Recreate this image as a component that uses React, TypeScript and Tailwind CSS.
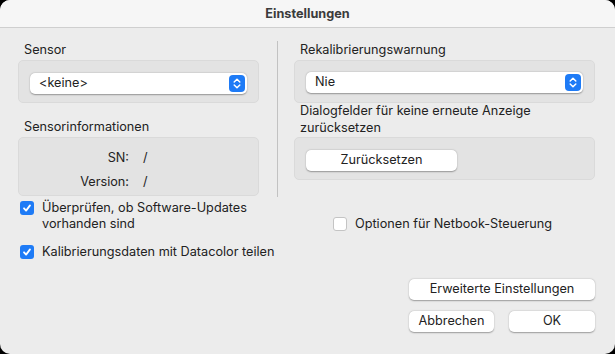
import React from 'react';

const font = { fontFamily: 'Inter, "Liberation Sans", Arial, sans-serif' };

function Stepper() {
  return (
    <div className="w-[16px] h-[17px] rounded-[4px] bg-[#1e7bf6] flex items-center justify-center">
      <svg width="10" height="13" viewBox="0 0 10 13" fill="none">
        <path d="M2.2 5 L5 2.2 L7.8 5" stroke="white" strokeWidth="1.5" strokeLinecap="round" strokeLinejoin="round" />
        <path d="M2.2 8 L5 10.8 L7.8 8" stroke="white" strokeWidth="1.5" strokeLinecap="round" strokeLinejoin="round" />
      </svg>
    </div>
  );
}

function Popup({ label }: { label: string }) {
  return (
    <div className="h-[21px] bg-white rounded-[5px] shadow-[0_0.5px_1.5px_rgba(0,0,0,0.35)] flex items-center justify-between pl-[9px] pr-[2px]">
      <span className="pb-[2px]">{label}</span>
      <Stepper />
    </div>
  );
}

function Button({ label, w }: { label: string; w: string }) {
  return (
    <button className={`${w} h-[21px] pb-[2px] bg-white rounded-[5px] shadow-[0_0.5px_1.5px_rgba(0,0,0,0.35)] flex items-center justify-center text-[12.7px] text-[#222]`}>
      {label}
    </button>
  );
}

function Check({ checked }: { checked: boolean }) {
  if (checked) {
    return (
      <div className="w-[14px] h-[14px] rounded-[3px] bg-[#1e7bf6] flex items-center justify-center shrink-0">
        <svg width="10" height="10" viewBox="0 0 10 10" fill="none">
          <path d="M2 5.3 L4.1 7.6 L8 2.4" stroke="white" strokeWidth="1.8" strokeLinecap="round" strokeLinejoin="round" />
        </svg>
      </div>
    );
  }
  return <div className="w-[14px] h-[14px] rounded-[3px] bg-white border border-[#c4c4c4] shrink-0" />;
}

const box = 'bg-[#e3e3e3] border border-[#dadada] rounded-[5px]';

export default function App() {
  return (
    <div className="w-[615px] h-[354px] bg-black" style={font}>
      <div className="w-full h-full rounded-[10px] overflow-hidden bg-[#ececec] flex flex-col text-[12.7px] text-[#222] leading-[16px]">
        <div className="h-[28px] shrink-0 bg-[#f6f6f6] border-b border-[#cfcfcf] flex items-center justify-center font-bold text-[#3b3b3b]">
          Einstellungen
        </div>

        <div className="pl-[18px] pr-[20px] pt-[14px]">
          <div className="flex">
            <div className="w-[241px] flex flex-col">
              <div className="pl-[6px] h-[18px]">Sensor</div>
              <div className={`${box} h-[43px] px-[11px] pt-[12px]`}>
                <Popup label="<keine>" />
              </div>
              <div className="pl-[6px] mt-[16px] h-[18px]">Sensorinformationen</div>
              <div className={`${box} h-[59px] pt-[12px]`}>
                <div className="grid grid-cols-[110px_1fr] gap-x-[14px] gap-y-[8px]">
                  <span className="text-right">SN:</span>
                  <span>/</span>
                  <span className="text-right">Version:</span>
                  <span>/</span>
                </div>
              </div>
            </div>
            <div className="ml-[18px] w-px h-[156px] bg-[#c2c2c2] mt-[-1px]" />
            <div className="ml-[16px] flex-1 flex flex-col">
              <div className="pl-[6px] h-[18px]">Rekalibrierungswarnung</div>
              <div className={`${box} h-[43px] px-[11px] pt-[11px]`}>
                <Popup label="Nie" />
              </div>
              <div className="pl-[6px] mt-[-1px] leading-[17px] h-[35px]">
                Dialogfelder für keine erneute Anzeige
                <br />
                zurücksetzen
              </div>
              <div className={`${box} h-[43px] px-[11px] pt-[12px]`}>
                <Button label="Zurücksetzen" w="w-[151px]" />
              </div>
            </div>
          </div>

          <div className="flex">
            <div className="w-[292px] pl-[2px] flex flex-col">
              <div className="flex gap-[8px] mt-[3px]">
                <div className="mt-[1px]"><Check checked /></div>
                <div>
                  Überprüfen, ob Software-Updates
                  <br />
                  vorhanden sind
                </div>
              </div>
              <div className="flex gap-[8px] mt-[12px] items-center">
                <Check checked />
                <div>Kalibrierungsdaten mit Datacolor teilen</div>
              </div>
            </div>
            <div className="flex-1 flex flex-col">
              <div className="flex items-center gap-[8px] ml-[23px] mt-[19px]">
                <Check checked={false} />
                <span>Optionen für Netbook-Steuerung</span>
              </div>
              <div className="flex flex-col items-end mt-[47px] gap-[11px]">
                <Button label="Erweiterte Einstellungen" w="w-[186px]" />
                <div className="flex gap-[15px]">
                  <Button label="Abbrechen" w="w-[85px]" />
                  <Button label="OK" w="w-[86px]" />
                </div>
              </div>
            </div>
          </div>
        </div>
      </div>
    </div>
  );
}
